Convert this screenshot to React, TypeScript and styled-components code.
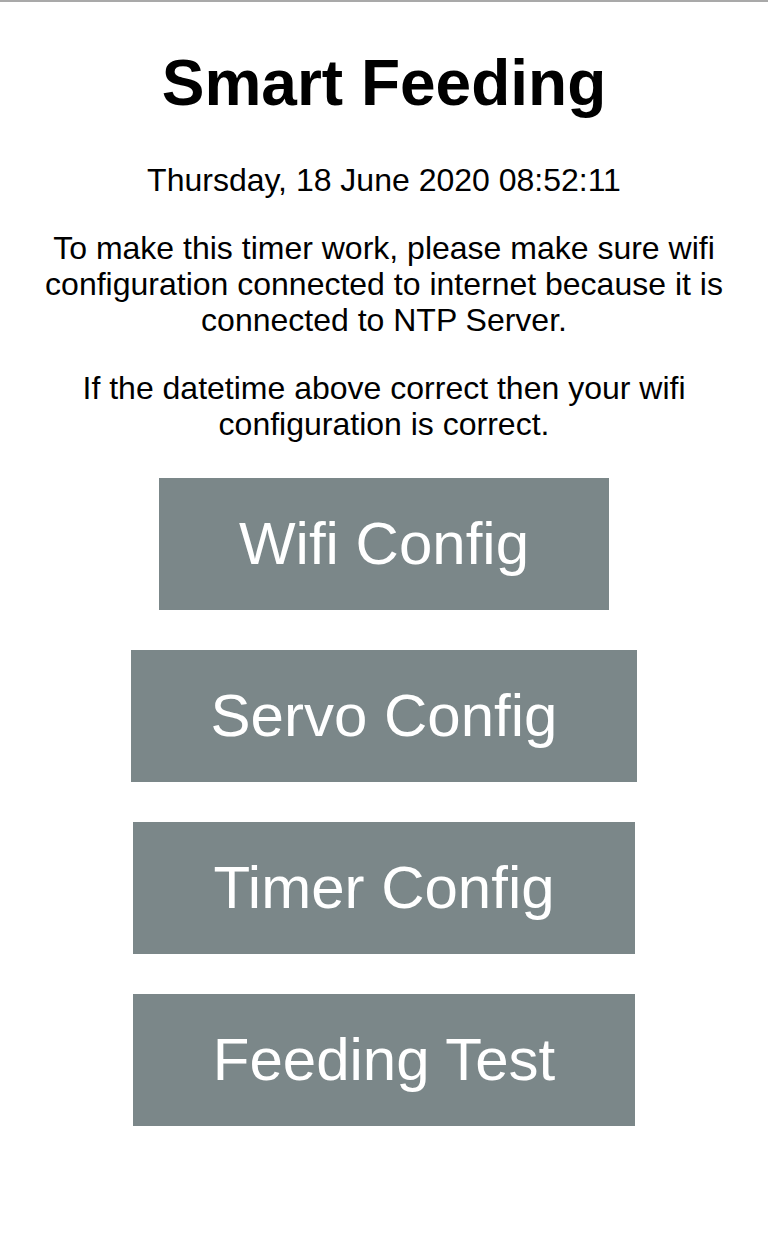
import React from "react";
import styled, { createGlobalStyle } from "styled-components";

const GlobalStyle = createGlobalStyle`
  html, body {
    margin: 0;
    padding: 0;
    background: #ffffff;
  }
  body {
    font-family: "Liberation Sans", Arial, Helvetica, sans-serif;
    color: #000000;
  }
`;

const Page = styled.div`
  border-top: 2px solid #a9a9a9;
  min-height: 1234px;
  box-sizing: border-box;
  display: flex;
  flex-direction: column;
  align-items: center;
  text-align: center;
  padding: 0 8px;
`;

const Title = styled.h1`
  margin: 44px 0 42px;
  font-size: 64px;
  line-height: 74px;
  font-weight: 700;
`;

const DateLine = styled.div`
  font-size: 32px;
  line-height: 36px;
`;

const Note = styled.p`
  margin: 32px 0 0;
  font-size: 32px;
  line-height: 36px;
`;

const ButtonList = styled.div`
  display: flex;
  flex-direction: column;
  align-items: center;
  gap: 40px;
  margin-top: 36px;
`;

const MenuButton = styled.a`
  display: block;
  padding: 32px 80px;
  background: #7b8789;
  color: #ffffff;
  font-size: 60px;
  line-height: 68px;
  text-decoration: none;
  white-space: nowrap;
  cursor: pointer;
`;

const buttons = ["Wifi Config", "Servo Config", "Timer Config", "Feeding Test"];

export default function App() {
  return (
    <>
      <GlobalStyle />
      <Page>
        <Title>Smart Feeding</Title>
        <DateLine>Thursday, 18 June 2020 08:52:11</DateLine>
        <Note>
          To make this timer work, please make sure wifi configuration connected to internet
          because it is connected to NTP Server.
        </Note>
        <Note>If the datetime above correct then your wifi configuration is correct.</Note>
        <ButtonList>
          {buttons.map((b) => (
            <MenuButton key={b}>{b}</MenuButton>
          ))}
        </ButtonList>
      </Page>
    </>
  );
}
